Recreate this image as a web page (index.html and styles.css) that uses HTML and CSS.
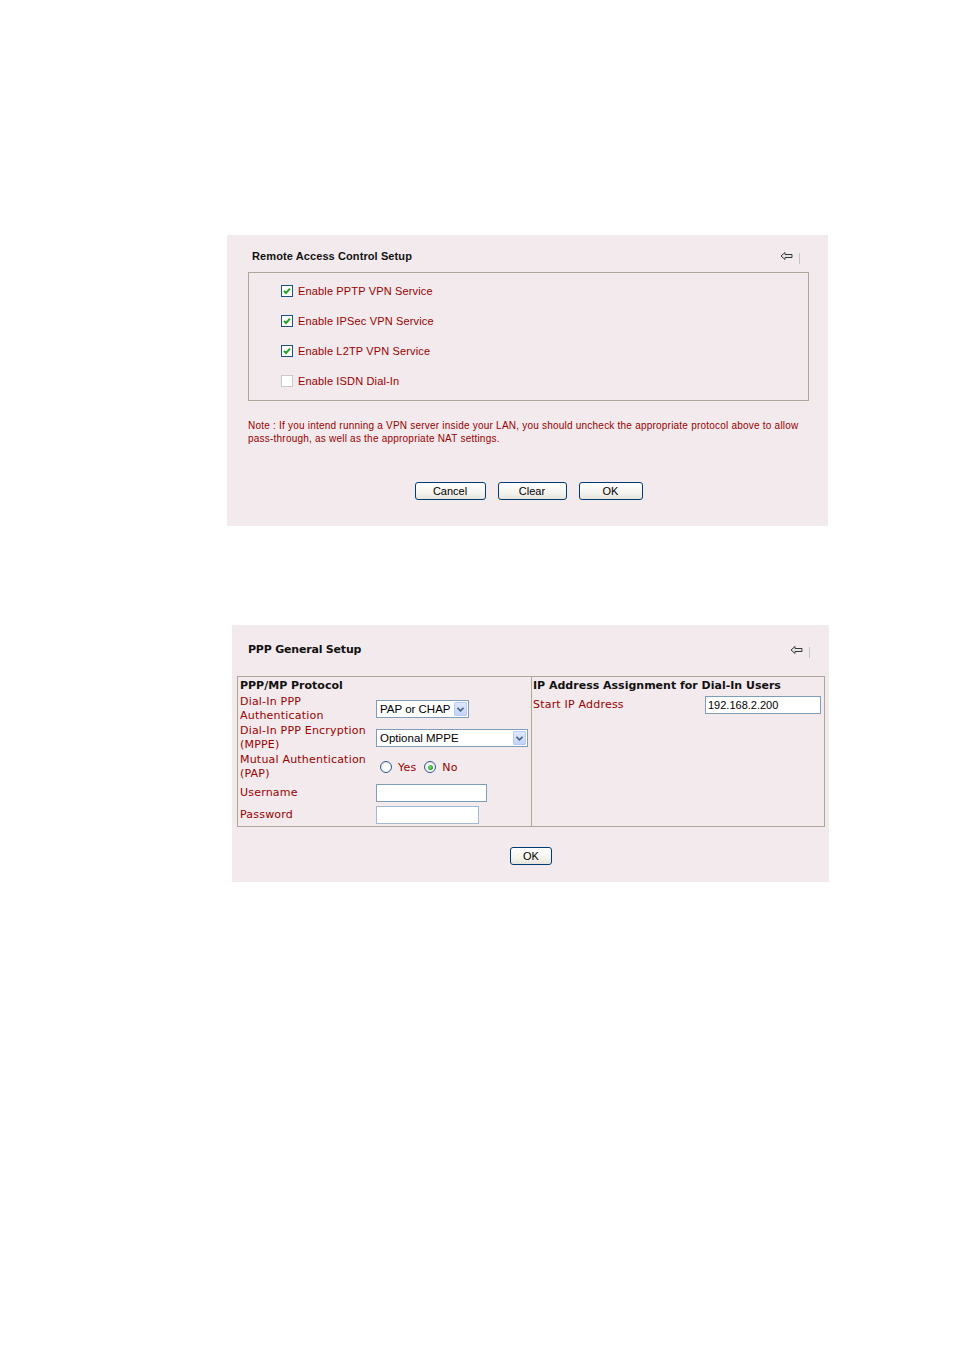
FILE: index.html
```html
<!DOCTYPE html>
<html lang="en">
<head>
<meta charset="utf-8">
<title>Remote Access Control Setup</title>
<link rel="stylesheet" href="styles.css">
</head>
<body>
<div class="page">
  <section class="panel panel-rac">
    <div class="panel-head rac-head">
      <h2 class="panel-title">Remote Access Control Setup</h2>
      <div class="head-tools rac-tools">
        <svg class="back-icon" width="13" height="10" viewBox="0 0 13 10"><path d="M1 5 L5 1.5 L5 3.5 L12 3.5 L12 6.5 L5 6.5 L5 8.5 Z" fill="#e6e6e6" stroke="#3a3a3a" stroke-width="1" stroke-linejoin="miter"/></svg>
        <span class="tool-sep"></span>
      </div>
    </div>
    <div class="opt-box">
      <div class="opt-row"><span class="cb on"><svg width="10" height="10" viewBox="0 0 10 10"><path d="M2 4.8 L4 7 L8 2.6" fill="none" stroke="#21a121" stroke-width="2"/></svg></span><span>Enable PPTP VPN Service</span></div>
      <div class="opt-row"><span class="cb on"><svg width="10" height="10" viewBox="0 0 10 10"><path d="M2 4.8 L4 7 L8 2.6" fill="none" stroke="#21a121" stroke-width="2"/></svg></span><span>Enable IPSec VPN Service</span></div>
      <div class="opt-row"><span class="cb on"><svg width="10" height="10" viewBox="0 0 10 10"><path d="M2 4.8 L4 7 L8 2.6" fill="none" stroke="#21a121" stroke-width="2"/></svg></span><span>Enable L2TP VPN Service</span></div>
      <div class="opt-row"><span class="cb off"></span><span>Enable ISDN Dial-In</span></div>
    </div>
    <p class="note">Note : If you intend running a VPN server inside your LAN, you should uncheck the appropriate protocol above to allow pass-through, as well as the appropriate NAT settings.</p>
    <div class="btn-row">
      <button class="btn btn-cancel">Cancel</button>
      <button class="btn btn-clear">Clear</button>
      <button class="btn btn-ok">OK</button>
    </div>
  </section>

  <section class="panel panel-ppp">
    <div class="panel-head ppp-head">
      <h2 class="panel-title ppp-title">PPP General Setup</h2>
      <div class="head-tools ppp-tools">
        <svg class="back-icon" width="13" height="10" viewBox="0 0 13 10"><path d="M1 5 L5 1.5 L5 3.5 L12 3.5 L12 6.5 L5 6.5 L5 8.5 Z" fill="#e6e6e6" stroke="#3a3a3a" stroke-width="1" stroke-linejoin="miter"/></svg>
        <span class="tool-sep"></span>
      </div>
    </div>
    <div class="ppp-grid">
      <div class="ppp-cell ppp-left">
        <div class="cell-head">PPP/MP Protocol</div>
        <div class="form-grid">
          <div class="flabel">Dial-In PPP Authentication</div>
          <div class="fctl"><div class="sel sel-auth"><span class="sel-text">PAP or CHAP</span><span class="sel-btn"><svg width="7" height="5" viewBox="0 0 7 5"><path d="M0.5 0.8 L3.5 3.8 L6.5 0.8" fill="none" stroke="#4d6185" stroke-width="1.6"/></svg></span></div></div>
          <div class="flabel">Dial-In PPP Encryption (MPPE)</div>
          <div class="fctl"><div class="sel sel-mppe"><span class="sel-text">Optional MPPE</span><span class="sel-btn"><svg width="7" height="5" viewBox="0 0 7 5"><path d="M0.5 0.8 L3.5 3.8 L6.5 0.8" fill="none" stroke="#4d6185" stroke-width="1.6"/></svg></span></div></div>
          <div class="flabel">Mutual Authentication (PAP)</div>
          <div class="fctl radios">
            <span class="radio"></span><span class="rtext">Yes</span>
            <span class="radio on"></span><span class="rtext">No</span>
          </div>
          <div class="flabel short">Username</div>
          <div class="fctl"><div class="inp inp-user"></div></div>
          <div class="flabel short">Password</div>
          <div class="fctl"><div class="inp inp-pass"></div></div>
        </div>
      </div>
      <div class="ppp-cell ppp-right">
        <div class="cell-head">IP Address Assignment for Dial-In Users</div>
        <div class="ip-row">
          <div class="flabel">Start IP Address</div>
          <div class="inp inp-ip">192.168.2.200</div>
        </div>
      </div>
    </div>
    <div class="btn-row ppp-btns">
      <button class="btn btn-ok2">OK</button>
    </div>
  </section>
</div>
</body>
</html>
```

FILE: styles.css
```css
* { box-sizing: border-box; }

body {
  margin: 0;
  background: #ffffff;
  font-family: "Liberation Sans", Arial, sans-serif;
  color: #000;
}

.page {
  padding-top: 235px;
  padding-bottom: 469px;
}

.panel {
  background: #f3eaed;
}

/* ---------- Panel 1 ---------- */
.panel-rac {
  margin-left: 227px;
  width: 601px;
  height: 291px;
  padding: 14px 19px 26px 21px;
}

.panel-head {
  display: flex;
  align-items: center;
  height: 14px;
}

.panel-title {
  margin: 0;
  font: bold 11px/14px "Liberation Sans", Arial, sans-serif;
  color: #111;
  letter-spacing: 0.1px;
}

.rac-head .panel-title { padding-left: 4px; }

.head-tools {
  margin-left: auto;
  display: flex;
  align-items: center;
  gap: 6px;
}

.rac-tools { margin-right: 9px; }

.back-icon { display: block; }

.tool-sep {
  display: block;
  width: 1px;
  height: 11px;
  margin-top: 5px;
  background: #c4c4c4;
}

.opt-box {
  margin-top: 9px;
  height: 129px;
  border: 1px solid #aca899;
  padding: 3px 0 3px 32px;
}

.opt-row {
  display: flex;
  align-items: center;
  height: 30px;
  font-size: 11px;
  color: #990000;
  letter-spacing: 0.15px;
}

.cb {
  display: flex;
  align-items: center;
  justify-content: center;
  width: 12px;
  height: 12px;
  margin-right: 5px;
  background: #fff;
  border: 1px solid #1c5180;
}

.cb.off { border-color: #c9c9c9; }

.note {
  margin: 18px 0 0;
  font-size: 10px;
  line-height: 13px;
  color: #990000;
  letter-spacing: 0.22px;
}

.btn-row {
  margin-top: 37px;
  display: flex;
  justify-content: center;
  gap: 12px;
}

.btn {
  height: 18px;
  padding: 0;
  border: 1px solid #003c74;
  border-radius: 3px;
  background: linear-gradient(#ffffff, #f4f3ee 60%, #e6e4dc);
  font: 11px/16px "Liberation Sans", Arial, sans-serif;
  color: #000;
}

.btn-cancel { width: 71px; }
.btn-clear { width: 69px; }
.btn-ok { width: 64px; }
.btn-ok2 { width: 42px; }

/* ---------- Panel 2 ---------- */
.panel-ppp {
  margin-top: 99px;
  margin-left: 232px;
  width: 597px;
  height: 257px;
  padding: 17px 4px 17px 5px;
}

.ppp-head {
  height: 15px;
  padding-top: 1px;
}

.ppp-title {
  padding-left: 11px;
  font-family: "DejaVu Sans", Verdana, sans-serif;
  letter-spacing: -0.2px;
}

.ppp-tools { margin-right: 15px; }

.ppp-grid {
  margin-top: 19px;
  width: 588px;
  height: 151px;
  display: grid;
  grid-template-columns: 294px 1fr;
  border: 1px solid #aca899;
  font-family: "DejaVu Sans", Verdana, sans-serif;
}

.ppp-left {
  border-right: 1px solid #aca899;
  padding: 2px 2px 1px;
}

.ppp-right {
  padding: 2px 1px 1px;
}

.cell-head {
  height: 14px;
  font-size: 11px;
  line-height: 14px;
  font-weight: bold;
  color: #111;
  letter-spacing: 0;
  margin-bottom: 2px;
}

.form-grid {
  display: grid;
  grid-template-columns: 136px 1fr;
  grid-template-rows: 28px 28px 28px 21px 21px;
  row-gap: 1px;
  align-items: center;
}

.flabel {
  font-size: 11px;
  line-height: 14px;
  color: #990000;
  letter-spacing: 0.2px;
}

.fctl {
  display: flex;
  align-items: center;
}

.sel {
  display: flex;
  align-items: center;
  height: 18px;
  background: #fff;
  border: 1px solid #7f9db9;
  padding: 1px;
  font-family: "Liberation Sans", Arial, sans-serif;
  font-size: 11.5px;
  color: #000;
}

.sel-auth { width: 93px; }
.sel-mppe { width: 152px; }

.sel-text {
  padding-left: 2px;
  flex: 1;
  white-space: nowrap;
}

.sel-btn {
  display: flex;
  align-items: center;
  justify-content: center;
  width: 13px;
  height: 14px;
  background: linear-gradient(#dfe8fd, #c3d4fb);
  border: 1px solid #b9cbf3;
  border-radius: 1px;
}

.radios { padding-left: 4px; }

.radio {
  display: flex;
  align-items: center;
  justify-content: center;
  width: 12px;
  height: 12px;
  border-radius: 50%;
  border: 1px solid #2c5b8a;
  background: radial-gradient(circle at 60% 60%, #ffffff 30%, #dcdcd6 100%);
}

.radio.on::after {
  content: "";
  width: 5px;
  height: 5px;
  border-radius: 50%;
  background: radial-gradient(circle at 40% 40%, #7bd97b, #21a121 70%);
}

.rtext {
  font-size: 11px;
  color: #990000;
  margin: 0 8px 0 6px;
  letter-spacing: 0.2px;
}

.inp {
  height: 18px;
  background: #fff;
  border: 1px solid #7f9db9;
}

.inp-user { width: 111px; }
.inp-pass { width: 103px; border-color: #a5b9d2; }

.ip-row {
  display: grid;
  grid-template-columns: 172px 116px;
  align-items: center;
  height: 20px;
}

.inp-ip {
  padding-left: 2px;
  font-family: "Liberation Sans", Arial, sans-serif;
  font-size: 11px;
  line-height: 16px;
  color: #000;
}

.ppp-btns { margin-top: 20px; }
```
